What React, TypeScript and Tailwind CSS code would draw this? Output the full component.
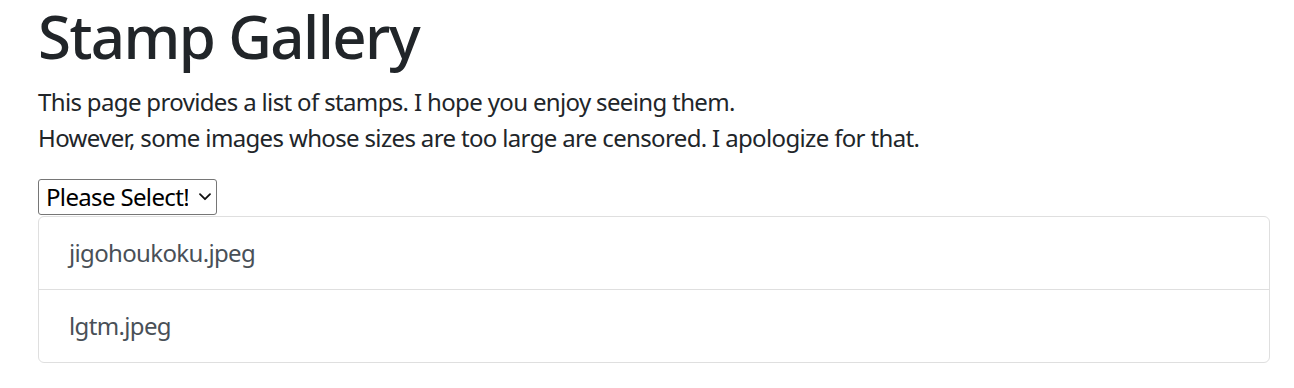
const stamps = ['jigohoukoku.jpeg', 'lgtm.jpeg'];

export default function App() {
  return (
    <div className="pl-[38px] pr-[24px] font-['Noto_Sans',sans-serif] text-[#212529] bg-white min-h-[388px]">
      <h1 className="text-[60px] leading-[72px] font-medium tracking-[-1.6px] mb-[12px]">Stamp Gallery</h1>
      <p className="text-[24px] leading-[36px] tracking-[-0.65px] mb-[24px]">
        This page provides a list of stamps. I hope you enjoy seeing them.
        <br />
        However, some images whose sizes are too large are censored. I apologize for that.
      </p>
      <div className="h-[36px] pt-[-1px]">
        <div className="relative inline-block">
          <select className="appearance-none block w-[179px] h-[36px] text-[24px] leading-[34px] text-black tracking-[-0.65px] border border-[#767676] rounded-[3px] bg-white pl-[7px] pr-[28px] -mt-px">
            <option>Please Select!</option>
          </select>
          <svg
            className="pointer-events-none absolute right-[6px] top-[13px]"
            width="12"
            height="8"
            viewBox="0 0 12 8"
            fill="none"
          >
            <path d="M1 1.2 6 6.2 11 1.2" stroke="#111" strokeWidth="1.8" strokeLinecap="round" strokeLinejoin="round" />
          </svg>
        </div>
      </div>
      <ul className="border border-[#dfdfdf] rounded-[6px]">
        {stamps.map((s, i) => (
          <li
            key={s}
            className={`px-[30px] py-[18px] text-[24px] leading-[36px] tracking-[-0.65px] text-[#495057] ${
              i < stamps.length - 1 ? 'border-b border-[#dfdfdf]' : ''
            }`}
          >
            {s}
          </li>
        ))}
      </ul>
    </div>
  );
}
